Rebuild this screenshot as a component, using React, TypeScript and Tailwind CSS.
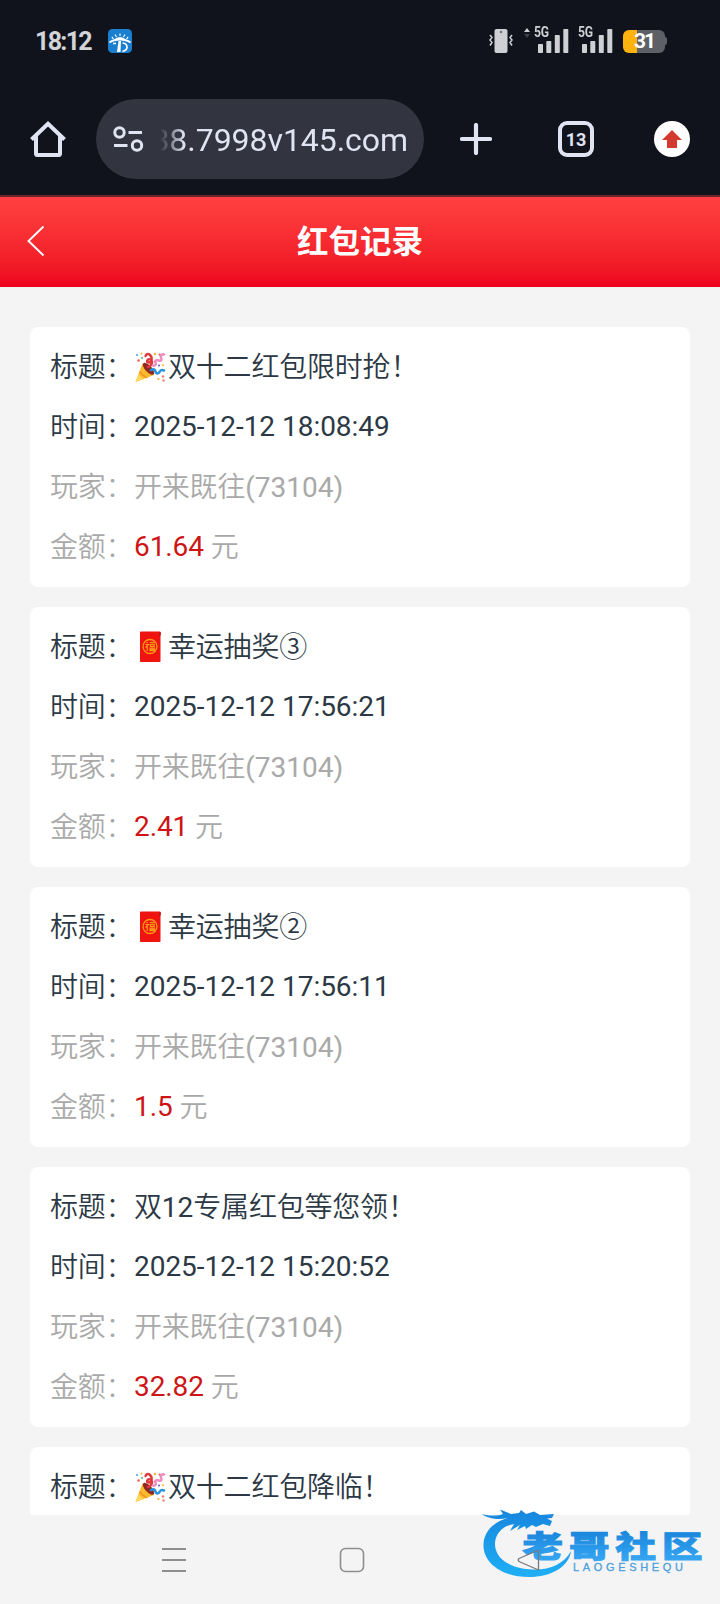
import { ReactNode } from 'react';

type Emoji = 'party' | 'envelope';

interface RedPacketRecord {
  emoji?: Emoji;
  title: string;
  time?: string;
  player?: string;
  amount?: string;
}

const records: RedPacketRecord[] = [
  { emoji: 'party', title: '双十二红包限时抢！', time: '2025-12-12 18:08:49', player: '开来既往(73104)', amount: '61.64' },
  { emoji: 'envelope', title: '幸运抽奖③', time: '2025-12-12 17:56:21', player: '开来既往(73104)', amount: '2.41' },
  { emoji: 'envelope', title: '幸运抽奖②', time: '2025-12-12 17:56:11', player: '开来既往(73104)', amount: '1.5' },
  { title: '双12专属红包等您领！', time: '2025-12-12 15:20:52', player: '开来既往(73104)', amount: '32.82' },
  { emoji: 'party', title: '双十二红包降临！' },
];

function PartyIcon() {
  return (
    <svg className="mr-[2px] h-8 w-8 shrink-0" viewBox="0 0 32 32" fill="none">
      <path d="M1.5 31L8.5 12.5C12 13.5 18.5 19.5 20 24Z" fill="#fcb92c" />
      <path d="M1.5 31L4.5 23C6 25 8.5 27.5 10 28Z" fill="#ffd75e" />
      <path d="M5.5 20.5C8 23.5 10.5 26 13.5 27" stroke="#f39420" strokeWidth="1.3" />
      <ellipse cx="14.5" cy="17.8" rx="3.2" ry="7.6" transform="rotate(-43 14.5 17.8)" fill="#8d2b20" />
      <path d="M14 16C18 15 19.5 10 16.5 8.5C13.5 7.2 11.5 11 14.5 11.5C18 11.8 19 6 15.5 3.5C14 2.4 12 3 11.5 5" stroke="#e2373a" strokeWidth="2.4" strokeLinecap="round" />
      <path d="M19 14.5C21 15 22.5 13.5 21.5 11.5C20.5 9.5 23 8.5 25 9.5C27.5 10.5 28 8.5 27 6.5C26 4.5 28 3 30 3.5" stroke="#ef8fc0" strokeWidth="2.6" strokeLinecap="round" />
      <path d="M17 19C19.5 17.5 21 18.5 21.5 20.5C22 23 24.5 23 25.5 21C26.5 19 28 18.5 30 19.5" stroke="#2593dd" strokeWidth="2.6" strokeLinecap="round" />
      <circle cx="3" cy="4" r="1.1" fill="#4ba7e5" />
      <circle cx="7.5" cy="2.5" r="1" fill="#f7b12c" />
      <circle cx="4.5" cy="9.5" r="1.2" fill="#ef5350" />
      <circle cx="8" cy="7" r="1" fill="#4caf8b" />
      <circle cx="21" cy="3" r="1.2" fill="#f7b12c" />
      <circle cx="25.5" cy="3.5" r="1" fill="#ef5350" />
      <circle cx="25" cy="14.5" r="1.1" fill="#7b5fc4" />
      <circle cx="29" cy="14" r="1" fill="#f7b12c" />
      <circle cx="24.5" cy="28" r="1.1" fill="#f7b12c" />
      <circle cx="29" cy="25.5" r="1.2" fill="#ef7b7b" />
      <circle cx="29.5" cy="29.5" r="1.3" fill="#ef8f70" />
    </svg>
  );
}

function EnvelopeIcon() {
  return (
    <svg className="mr-[2px] h-8 w-8 shrink-0" viewBox="0 0 32 32" fill="none">
      <rect x="6" y="0.5" width="20.5" height="30.5" rx="0.8" fill="#f01410" />
      <path d="M25.5 1V5.5L26.7 4V1.3Z" fill="#a3100d" />
      <circle cx="16" cy="15.5" r="7" stroke="#fb9a14" strokeWidth="1.3" />
      <path d="M12.8 11L13.6 12.1M11.3 13.5H14.5L11.5 16.7M13.2 15V20M15.8 11.7H20.8M16.4 13.5H20.2V15.3H16.4ZM16 17H20.6V19.7H16ZM18.3 17V19.7M16 18.4H20.6" stroke="#fb9a14" strokeWidth="1.2" />
    </svg>
  );
}

function Signal() {
  return (
    <div className="flex items-center">
      <span className="-mt-4 w-[15px] origin-left scale-x-[0.84] text-[14.5px] leading-none font-bold tracking-tight whitespace-nowrap text-[#cfd0d4]">
        5G
      </span>
      <svg className="-ml-[11px] h-6 w-[31px]" viewBox="0 0 31 24" fill="#cfd0d4">
        <rect x="0" y="15" width="5" height="9" rx="0.8" />
        <rect x="8.3" y="12" width="5" height="12" rx="0.8" />
        <rect x="16.8" y="6" width="5" height="18" rx="0.8" />
        <rect x="25.3" y="0" width="5" height="24" rx="0.8" />
      </svg>
    </div>
  );
}

function StatusBar() {
  return (
    <div className="flex h-[82px] items-center pl-[35px]">
      <span className="w-[59px] text-[25px] leading-none font-bold tracking-[-1.7px] text-[#d3d4d8]">18:12</span>
      <svg className="ml-[14px] h-6 w-6" viewBox="0 0 24 24" fill="none">
        <rect width="24" height="24" rx="4.5" fill="#1b7fd0" />
        <path d="M1.5 13.5C7 9.5 17 9.5 22.5 13.5" stroke="white" strokeWidth="1.8" />
        <path d="M7 10C8.5 7.5 15.5 7.5 17 10Z" fill="white" />
        <path d="M12 7V4.5M8.500 8L7 5.500M15.500 8L17 5.500M5.500 9.800L3.800 8M18.500 9.800L20.200 8" stroke="white" strokeWidth="1.1" />
        <path d="M10.5 12H13L12.5 23H9Z" fill="white" />
        <path d="M5 14.5H8M14.5 14C20.5 14.5 20.5 21.5 14.5 22.3" stroke="white" strokeWidth="1.7" />
      </svg>

      <svg className="ml-auto h-6 w-6" viewBox="0 0 24 24" fill="none">
        <rect x="5.5" y="0" width="13" height="24" rx="2" fill="#cfd0d4" />
        <circle cx="12" cy="3" r="1.2" fill="#6d6f76" />
        <path d="M1 6L3 8.5L1 11L3 13.5L1 16.5M23 6L21 8.5L23 11L21 13.5L23 16.5" stroke="#cfd0d4" strokeWidth="1.5" />
      </svg>
      <svg className="-mt-4 ml-[11px] h-[10px] w-[6px]" viewBox="0 0 6 10">
        <path d="M0 4L3 0L6 4Z" fill="#cfd0d4" />
        <path d="M0 6L3 10L6 6Z" fill="#3c4048" />
      </svg>
      <div className="ml-1 flex items-center gap-[9px]">
        <Signal />
        <Signal />
      </div>
      <div className="mr-[53px] ml-[10px] flex items-center">
        <div className="flex h-[23px] w-[42px] items-center justify-center rounded-md bg-linear-to-r from-[#ffb30f] from-33% to-[#5e6068] to-33% pt-px text-[21px] leading-none font-bold tracking-[-2px] text-white">
          31
        </div>
        <div className="h-2 w-[2px] rounded-r bg-[#5e6068]" />
      </div>
    </div>
  );
}

function BrowserToolbar() {
  return (
    <div className="flex h-[113px] items-start pt-[17px] pl-[30px]">
      <svg className="mt-[22px] h-9 w-9" viewBox="0 0 36 36" fill="none" stroke="#e0e3f1" strokeWidth="4">
        <path d="M1.5 18.5L18 2.8L34.5 18.5" />
        <path d="M6 15V32.5Q6 34 7.5 34H28.5Q30 34 30 32.5V15" />
      </svg>
      <div className="ml-[30px] flex h-20 w-[328px] items-center rounded-full bg-[#32343f] pl-4">
        <svg className="h-7 w-8" viewBox="0 0 32 28" fill="none" stroke="#e0e3f1" strokeWidth="3">
          <circle cx="7.5" cy="7.5" r="4.7" />
          <path d="M16.5 7.5H30M2 20.5H15.5" />
          <circle cx="25" cy="20.5" r="4.7" />
        </svg>
        <div className="ml-4 flex w-[248px] justify-end overflow-hidden pt-[2px] text-[32px] leading-10 tracking-[-0.05px] text-[#e0e3f1] [mask-image:linear-gradient(90deg,transparent,black_24px)]">
          <span>38.7998v145.com</span>
        </div>
      </div>
      <svg className="mt-6 ml-9 h-8 w-8" viewBox="0 0 32 32" stroke="#e0e3f1" strokeWidth="4.2" strokeLinecap="round">
        <path d="M16 2V30M2 16H30" />
      </svg>
      <div className="mt-[22px] ml-[66px] flex h-9 w-9 items-center justify-center rounded-[9px] border-4 border-[#e0e3f1] pt-px text-[18px] leading-none font-bold text-[#e0e3f1]">
        13
      </div>
      <svg className="mt-[22px] ml-[60px] h-9 w-9" viewBox="0 0 36 36">
        <circle cx="18" cy="18" r="18" fill="white" />
        <path d="M18 9L28 19H23V27H13V19H8Z" fill="#d33a2f" />
      </svg>
    </div>
  );
}

// Chinese runs are set a little lighter than the Latin digits next to them
function MixedText({ text }: { text: string }) {
  return (
    <span className="pt-px font-[350] tracking-[-0.2px]">
      {text.split(/([\x20-\x7e]+)/).map((part, i) =>
        i % 2 === 1 ? (
          <span key={i} className="font-normal tracking-normal">{part}</span>
        ) : (
          part
        )
      )}
    </span>
  );
}

function Row({ label, muted, children }: { label: string; muted?: boolean; children: ReactNode }) {
  return (
    <div className={`flex h-[60px] items-center whitespace-pre ${muted ? 'text-[#a9a9a9]' : 'text-[#2c3945]'}`}>
      <span className="w-[84px] pt-px font-[350] tracking-[-0.2px]">
        {label}
        <span className="font-light">：</span>
      </span>
      {children}
    </div>
  );
}

function RecordCard({ record }: { record: RedPacketRecord }) {
  return (
    <div className="h-[260px] shrink-0 rounded-lg bg-white px-5 py-[10px] text-[28px] leading-[36px]">
      <Row label="标题">
        {record.emoji === 'party' && <PartyIcon />}
        {record.emoji === 'envelope' && <EnvelopeIcon />}
        <MixedText text={record.title} />
      </Row>
      {record.time && (
        <Row label="时间">
          <span className="tracking-[-0.03px]">{record.time}</span>
        </Row>
      )}
      {record.player && (
        <Row label="玩家" muted>
          <MixedText text={record.player} />
        </Row>
      )}
      {record.amount && (
        <Row label="金额" muted>
          <span className="tracking-[-0.1px] text-[#cd1517]">{record.amount}</span>
          <span className="pt-px font-[350]"> 元</span>
        </Row>
      )}
    </div>
  );
}

function NavigationBar() {
  return (
    <div className="flex h-[89px] items-center bg-[#f4f4f4] pl-[161px]">
      <svg className="h-[26px] w-[26px]" viewBox="0 0 26 26" stroke="#8e8e8e" strokeWidth="1.8">
        <path d="M1 2H25M1 13H25M1 24H25" />
      </svg>
      <svg className="ml-[152px] h-[26px] w-[26px]" viewBox="0 0 26 26" fill="none" stroke="#8e8e8e" strokeWidth="1.6">
        <rect x="1.5" y="1.5" width="23" height="23" rx="5" />
      </svg>
    </div>
  );
}

// Site logo stamped over the bottom right corner, with the back key showing through
function Watermark() {
  return (
    <svg className="absolute right-0 bottom-1 h-[110px] w-[250px]" viewBox="0 0 250 110" fill="none">
      <defs>
        <linearGradient id="wm" x1="0" y1="18" x2="0" y2="88" gradientUnits="userSpaceOnUse">
          <stop offset="0" stopColor="#1685de" />
          <stop offset="1" stopColor="#1fb0f5" />
        </linearGradient>
        <linearGradient id="wmText" x1="0" y1="-26" x2="0" y2="3" gradientUnits="userSpaceOnUse">
          <stop offset="0" stopColor="#1a86dc" />
          <stop offset="1" stopColor="#35a5f2" />
        </linearGradient>
      </defs>
      <path d="M43 27C24 30 13 42 13.5 56C14 74 33 87 59 87C81 87 99 77 101 61C94 74 80 80 63 79.5C41 79 25 69 25 54C25 43 34 35 47 32Z" fill="url(#wm)" />
      <path d="M12 24C20 26 27 26 33 24L30 19.5L41 24L49 23L51 20L56 24L64 21.5L70 25L84 24L82 28L77 28.5L82 31L80 36L73 34L66 37L62 35L56 39L55 36L47 40L50 35L40 41L44 34C35 36 27 39 20 45C24 36 30 31 38 28C29 30 18 29 12 24Z" fill="url(#wm)" />
      <g fill="url(#wmText)" stroke="url(#wmText)" strokeWidth="1" fontSize="30" fontWeight="900" fontFamily="'Noto Sans CJK SC', sans-serif">
        <text transform="translate(52.5 67) scale(1.35 1)">老</text>
        <text transform="translate(99 67) scale(1.35 1)">哥</text>
        <text transform="translate(145.5 67) scale(1.35 1)">社</text>
        <text transform="translate(192 67) scale(1.35 1)">区</text>
      </g>
      <text x="103" y="80.5" fill="#4c9fdd" stroke="#4c9fdd" strokeWidth="0.3" fontSize="11" textLength="110" fontFamily="'Liberation Sans', sans-serif">LAOGESHEQU</text>
      <path d="M68.500 60V80L49 71.500Q47.500 70 49 68.500Z" stroke="#77797b" strokeWidth="1.3" strokeLinejoin="round" />
    </svg>
  );
}

export default function App() {
  return (
    <div className="relative flex h-[1604px] w-[720px] flex-col overflow-hidden bg-[#f4f4f4] font-[Roboto,'Noto_Sans_CJK_SC',sans-serif]">
      <div className="bg-[#10131c]">
        <StatusBar />
        <BrowserToolbar />
      </div>
      <header className="flex h-[92px] shrink-0 items-center border-t-2 border-[#6a252b] bg-linear-to-b from-[#ff4040] to-[#ed001e] pl-[27px]">
        <svg className="-mt-[2px] h-8 w-[18px]" viewBox="0 0 18 32" fill="none" stroke="white" strokeWidth="1.9">
          <path d="M16.5 1.5L1.5 16L16.5 30.5" />
        </svg>
        <h1 className="mr-[45px] flex-1 pt-px text-center text-[31.5px] leading-9 font-bold text-white">红包记录</h1>
      </header>
      <main className="flex min-h-0 flex-1 flex-col gap-5 overflow-hidden px-[30px] pt-10">
        {records.map(record => (
          <RecordCard key={record.title} record={record} />
        ))}
      </main>
      <NavigationBar />
      <Watermark />
    </div>
  );
}
